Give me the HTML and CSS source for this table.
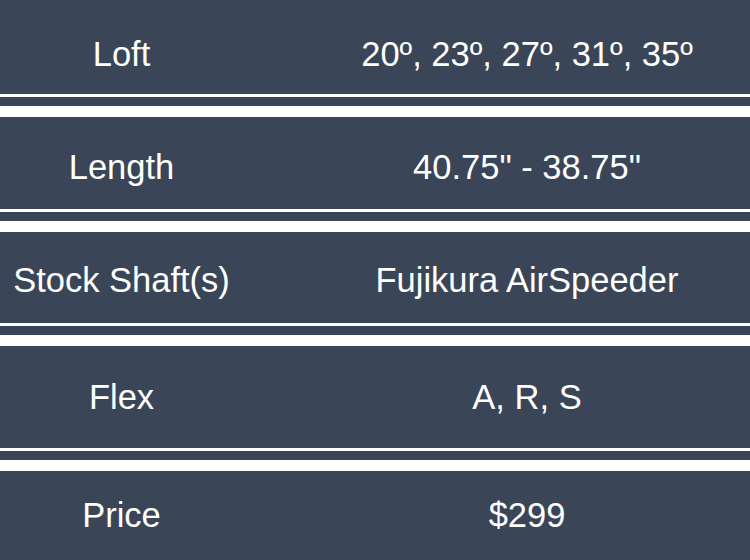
FILE: index.html
```html
<!DOCTYPE html>
<html>
<head>
<meta charset="utf-8">
<link rel="stylesheet" href="styles.css">
</head>
<body>
<div class="specs">
  <div class="spec">
    <div class="spec-body"><div class="label">Loft</div><div class="value">20º, 23º, 27º, 31º, 35º</div></div>
    <div class="spec-rule"></div>
  </div>
  <div class="spec">
    <div class="spec-body"><div class="label">Length</div><div class="value">40.75" - 38.75"</div></div>
    <div class="spec-rule"></div>
  </div>
  <div class="spec">
    <div class="spec-body"><div class="label">Stock Shaft(s)</div><div class="value">Fujikura AirSpeeder</div></div>
    <div class="spec-rule"></div>
  </div>
  <div class="spec">
    <div class="spec-body"><div class="label">Flex</div><div class="value">A, R, S</div></div>
    <div class="spec-rule"></div>
  </div>
  <div class="spec">
    <div class="spec-body"><div class="label">Price</div><div class="value">$299</div></div>
    <div class="spec-rule"></div>
  </div>
</div>
</body>
</html>
```
FILE: styles.css
```css
html, body {
  margin: 0;
  padding: 0;
  background: #ffffff;
}
body {
  width: 750px;
  height: 560px;
  overflow: hidden;
  font-family: "Liberation Sans", Arial, sans-serif;
}
.specs {
  display: flex;
  flex-direction: column;
  gap: 11px;
}
.spec {
  display: flex;
  flex-direction: column;
  background: #3a4657;
  color: #ffffff;
}
.spec-body {
  display: grid;
  grid-template-columns: 243px 1fr;
  column-gap: 61px;
  align-items: start;
  font-size: 34.5px;
  line-height: 39px;
  box-sizing: border-box;
}
.label, .value {
  text-align: center;
  white-space: nowrap;
}
.spec-rule {
  height: 3px;
  background: #ffffff;
  margin-bottom: 9px;
}
.spec:nth-child(1) .spec-body { height: 94px; padding-top: 35px; }
.spec:nth-child(2) .spec-body { height: 92px; padding-top: 31px; }
.spec:nth-child(3) .spec-body { height: 91px; padding-top: 29px; }
.spec:nth-child(4) .spec-body { height: 101px; padding-top: 32px; margin-bottom: 1px; }
.spec:nth-child(5) .spec-body { height: 101px; padding-top: 25px; }
```
